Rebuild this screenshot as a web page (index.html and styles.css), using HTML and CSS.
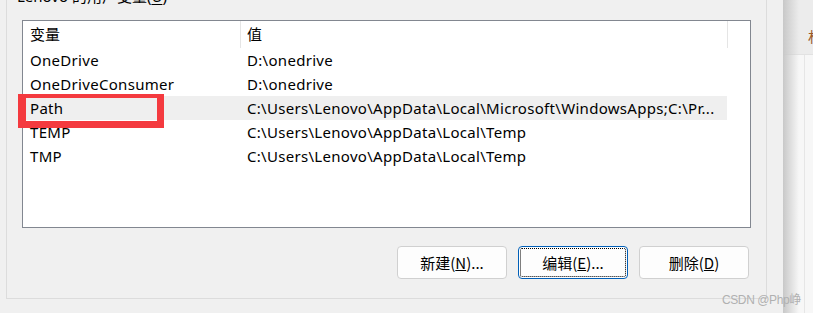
FILE: index.html
```html
<!DOCTYPE html>
<html lang="zh-CN">
<head>
    <meta charset="UTF-8">
    <meta name="viewport" content="width=device-width, initial-scale=1.0">
    <title>环境变量</title>
    <link rel="stylesheet" href="styles.css">
</head>
<body>
    <div class="screen">
        <div class="dialog">
            <div class="group">
                <div class="group-title">Lenovo 的用户变量(<u>U</u>)</div>
                <div class="listview">
                    <div class="lv-header">
                        <div class="hcell col-name">变量</div>
                        <div class="hcell col-value">值</div>
                    </div>
                    <div class="lv-row">
                        <div class="cell col-name">OneDrive</div>
                        <div class="cell col-value">D:\onedrive</div>
                    </div>
                    <div class="lv-row">
                        <div class="cell col-name">OneDriveConsumer</div>
                        <div class="cell col-value">D:\onedrive</div>
                    </div>
                    <div class="lv-row selected">
                        <div class="cell col-name">Path</div>
                        <div class="cell col-value">C:\Users\Lenovo\AppData\Local\Microsoft\WindowsApps;C:\Pr...</div>
                    </div>
                    <div class="lv-row">
                        <div class="cell col-name">TEMP</div>
                        <div class="cell col-value">C:\Users\Lenovo\AppData\Local\Temp</div>
                    </div>
                    <div class="lv-row">
                        <div class="cell col-name">TMP</div>
                        <div class="cell col-value">C:\Users\Lenovo\AppData\Local\Temp</div>
                    </div>
                    <div class="mark"></div>
                </div>
                <div class="buttons">
                    <button class="win-button">新建(<u>N</u>)...</button>
                    <button class="win-button focused">编辑(<u>E</u>)...</button>
                    <button class="win-button">删除(<u>D</u>)</button>
                </div>
            </div>
        </div>
        <div class="side">
            <div class="side-top"><span class="side-tab">材</span></div>
            <div class="side-body"></div>
        </div>
        <div class="watermark">CSDN @Php峥</div>
    </div>
</body>
</html>
```

FILE: styles.css
```css
body {
    margin: 0;
    background-color: #f0f0f0;
    font-family: "Noto Sans", "Noto Sans CJK SC", sans-serif;
    font-size: 15px;
    color: #000;
    overflow: hidden;
}
.screen {
    position: relative;
    display: flex;
    width: 813px;
    height: 313px;
    overflow: hidden;
}
.dialog {
    width: 783px;
    flex-shrink: 0;
}
.group {
    display: flex;
    flex-direction: column;
    align-items: flex-start;
    margin: -4px 0 0 6px;
    width: 761px;
    height: 303px;
    box-sizing: border-box;
    border: 1px solid #dcdcdc;
}
.group-title {
    height: 20px;
    margin: -11px 0 0 9px;
    padding: 0 1px;
    line-height: 20px;
    background-color: #f0f0f0;
}
.group-title u {
    text-underline-offset: 2px;
}
.listview {
    position: relative;
    margin: 14px 0 0 15px;
    width: 729px;
    height: 208px;
    box-sizing: border-box;
    border: 1px solid #828790;
    background-color: #fff;
}
.lv-header {
    display: flex;
    height: 27px;
}
.hcell {
    box-sizing: border-box;
    border-right: 1px solid #e5e5e5;
    height: 27px;
    line-height: 27px;
    padding-left: 7px;
}
.hcell.col-name {
    width: 218px;
}
.hcell.col-value {
    width: 487px;
    padding-left: 6px;
}
.lv-row {
    display: flex;
    width: 704px;
    height: 24px;
    line-height: 24px;
}
.lv-row.selected {
    background-color: #efefef;
}
.cell {
    box-sizing: border-box;
    height: 24px;
    padding-left: 7px;
    white-space: nowrap;
    overflow: hidden;
    letter-spacing: 0.3px;
}
.cell.col-name {
    width: 217px;
}
.cell.col-value {
    width: 487px;
}
.mark {
    position: absolute;
    left: -5px;
    top: 73px;
    width: 146px;
    height: 34px;
    box-sizing: border-box;
    border-style: solid;
    border-color: #f43a3f;
    border-width: 4px 7px 7px 8px;
}
.buttons {
    display: flex;
    align-self: stretch;
    justify-content: flex-end;
    gap: 11px;
    margin: 18px 17px 0 0;
}
.win-button {
    width: 110px;
    height: 33px;
    padding: 0;
    border: 1px solid #d0d0d0;
    border-radius: 4px;
    background-color: #fdfdfd;
    font-family: "Noto Sans CJK SC", sans-serif;
    font-size: 15px;
    color: #000;
}
.win-button.focused {
    border-color: #005fb8;
    outline: 1px dotted #000;
    outline-offset: -3px;
}
.side {
    position: relative;
    flex: 1;
    display: flex;
    flex-direction: column;
    background-color: #f7f7f7;
}
.side::before {
    content: "";
    position: absolute;
    left: 0;
    top: 0;
    bottom: 0;
    width: 16px;
    background: linear-gradient(to right, #c8c8c8, rgba(230, 230, 230, 0));
}
.side-top {
    height: 55px;
    box-sizing: border-box;
    border-bottom: 1px solid #e2e2e2;
    background-color: #ececec;
    padding: 26px 0 0 25px;
}
.side-tab {
    font-family: "Noto Sans CJK SC", sans-serif;
    font-size: 14px;
    color: #9a5a2a;
}
.side-body {
    flex: 1;
    margin-left: 21px;
    border-left: 1px solid #e6e6e6;
}
.watermark {
    position: absolute;
    left: 722px;
    top: 290px;
    font-family: "Liberation Sans", "Noto Sans CJK SC", sans-serif;
    font-size: 12px;
    letter-spacing: -0.4px;
    color: #b0b0b0;
}
```
